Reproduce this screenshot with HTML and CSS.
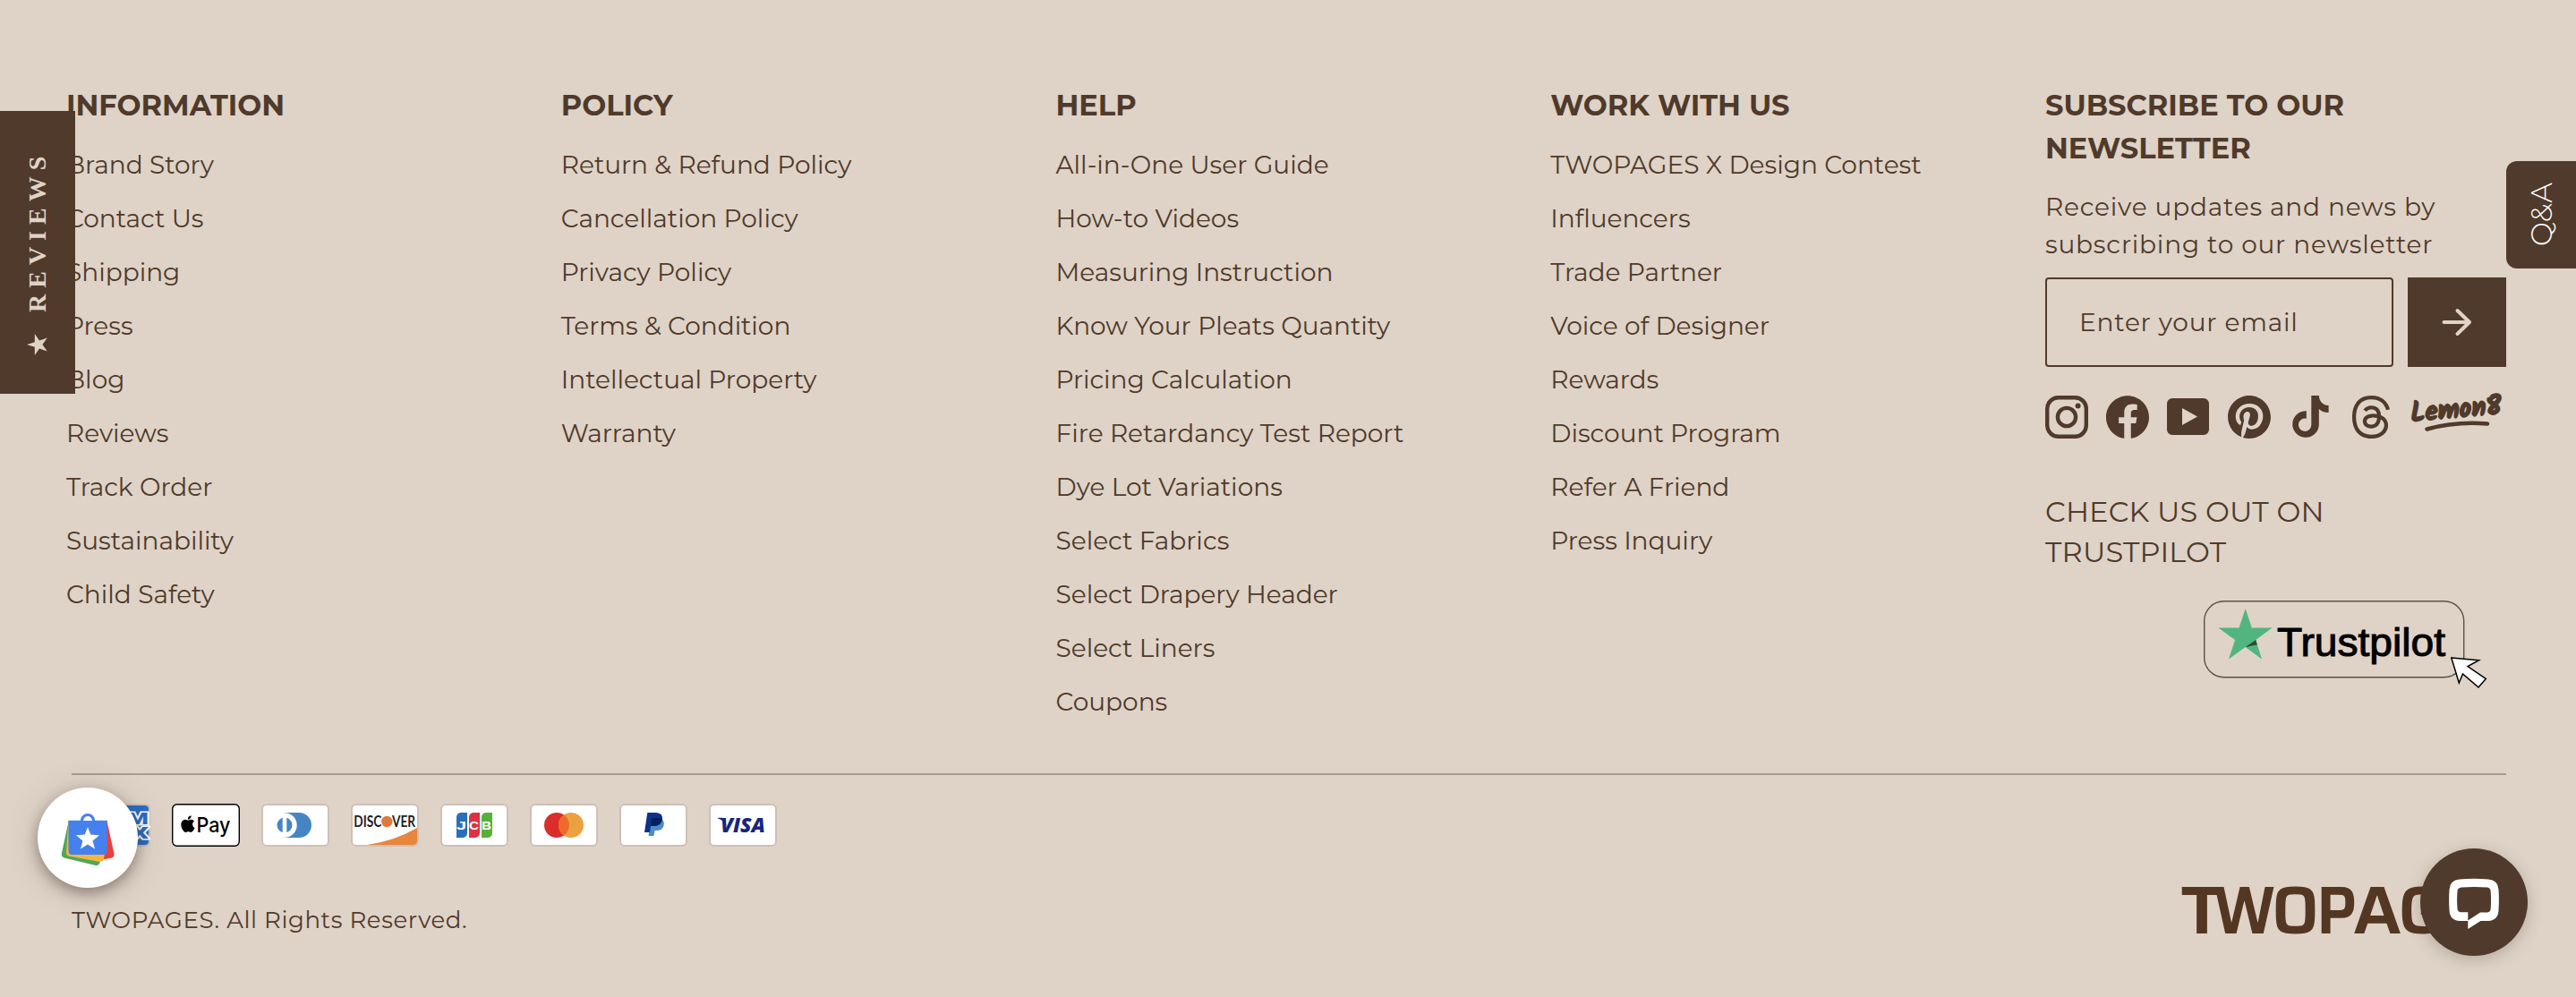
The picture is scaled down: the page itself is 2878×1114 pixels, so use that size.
FILE: index.html
```html
<!DOCTYPE html>
<html lang="en">
<head>
<meta charset="utf-8">
<title>TWOPAGES</title>
<link rel="stylesheet" href="styles.css">
</head>
<body>
<footer class="footer">
  <div class="columns">
    <section>
      <h2>INFORMATION</h2>
      <ul>
        <li>Brand Story</li>
        <li>Contact Us</li>
        <li>Shipping</li>
        <li>Press</li>
        <li>Blog</li>
        <li>Reviews</li>
        <li>Track Order</li>
        <li>Sustainability</li>
        <li>Child Safety</li>
      </ul>
    </section>
    <section>
      <h2>POLICY</h2>
      <ul>
        <li>Return &amp; Refund Policy</li>
        <li>Cancellation Policy</li>
        <li>Privacy Policy</li>
        <li>Terms &amp; Condition</li>
        <li>Intellectual Property</li>
        <li>Warranty</li>
      </ul>
    </section>
    <section>
      <h2>HELP</h2>
      <ul>
        <li>All-in-One User Guide</li>
        <li>How-to Videos</li>
        <li>Measuring Instruction</li>
        <li>Know Your Pleats Quantity</li>
        <li>Pricing Calculation</li>
        <li>Fire Retardancy Test Report</li>
        <li>Dye Lot Variations</li>
        <li>Select Fabrics</li>
        <li>Select Drapery Header</li>
        <li>Select Liners</li>
        <li>Coupons</li>
      </ul>
    </section>
    <section>
      <h2>WORK WITH US</h2>
      <ul>
        <li>TWOPAGES X Design Contest</li>
        <li>Influencers</li>
        <li>Trade Partner</li>
        <li>Voice of Designer</li>
        <li>Rewards</li>
        <li>Discount Program</li>
        <li>Refer A Friend</li>
        <li>Press Inquiry</li>
      </ul>
    </section>
    <section class="newsletter">
      <h2>SUBSCRIBE TO OUR NEWSLETTER</h2>
      <p class="lead">Receive updates and news by subscribing to our newsletter</p>
      <form class="signup">
        <div class="field">Enter your email</div>
        <button type="button" class="send" aria-label="Subscribe">
          <svg width="34" height="34" viewBox="0 0 34 34"><path d="M2.5 17H31M17.5 4L31 17L17.5 30" fill="none" stroke="#dfd3c7" stroke-width="4" stroke-linecap="round" stroke-linejoin="round"/></svg>
        </button>
      </form>
      <div class="social">
        <svg width="48" height="48" viewBox="0 0 48 48"><rect x="2.2" y="2.2" width="43.6" height="43.6" rx="12.5" fill="none" stroke="currentColor" stroke-width="4.4"/><circle cx="24" cy="24" r="10.1" fill="none" stroke="currentColor" stroke-width="4.4"/><circle cx="36.6" cy="11.4" r="3"/></svg>
        <svg width="48" height="48" viewBox="0 0 24 24"><path d="M24 12.073c0-6.627-5.373-12-12-12s-12 5.373-12 12c0 5.99 4.388 10.954 10.125 11.854v-8.385H7.078v-3.47h3.047V9.43c0-3.007 1.792-4.669 4.533-4.669 1.312 0 2.686.235 2.686.235v2.953H15.83c-1.491 0-1.956.925-1.956 1.874v2.25h3.328l-.532 3.47h-2.796v8.385C19.612 23.027 24 18.062 24 12.073z"/></svg>
        <svg width="48" height="48" viewBox="0 0 48 48"><path fill-rule="evenodd" d="M6 3H41a6 6 0 0 1 6 6V38a6 6 0 0 1-6 6H6a6 6 0 0 1-6-6V9a6 6 0 0 1 6-6ZM17 14V33L34 23.5Z"/></svg>
        <svg width="48" height="48" viewBox="0 0 24 24"><path d="M12.017 0C5.396 0 .029 5.367.029 11.987c0 5.079 3.158 9.417 7.618 11.162-.105-.949-.199-2.403.041-3.439.219-.937 1.406-5.957 1.406-5.957s-.359-.72-.359-1.781c0-1.663.967-2.911 2.168-2.911 1.024 0 1.518.769 1.518 1.688 0 1.029-.653 2.567-.992 3.992-.285 1.193.6 2.165 1.775 2.165 2.128 0 3.768-2.245 3.768-5.487 0-2.861-2.063-4.869-5.008-4.869-3.41 0-5.409 2.562-5.409 5.199 0 1.033.394 2.143.889 2.741.099.12.112.225.085.345-.09.375-.293 1.199-.334 1.363-.053.225-.172.271-.401.165-1.495-.69-2.433-2.878-2.433-4.646 0-3.776 2.748-7.252 7.92-7.252 4.158 0 7.392 2.967 7.392 6.923 0 4.135-2.607 7.462-6.233 7.462-1.214 0-2.354-.629-2.758-1.379l-.749 2.848c-.269 1.045-1.004 2.352-1.498 3.146 1.123.345 2.306.535 3.55.535 6.607 0 11.985-5.365 11.985-11.987C23.97 5.39 18.592.026 11.985.026L12.017 0z"/></svg>
        <svg width="48" height="48" viewBox="0 0 48 48"><path d="M25.3 0H33.8C34 6 38 11 44.6 11V19C40 19 36.5 17.5 33.8 15V33.2A14.8 14.8 0 1 1 19.8 17.2V25.7A7.2 7.2 0 1 0 25.3 33Z"/></svg>
        <svg width="48" height="48" viewBox="0 0 24 24"><path d="M12.186 24h-.007c-3.581-.024-6.334-1.205-8.184-3.509C2.35 18.44 1.5 15.586 1.472 12.01v-.017c.03-3.579.879-6.43 2.525-8.482C5.845 1.205 8.6.024 12.18 0h.014c2.746.02 5.043.725 6.826 2.098 1.677 1.29 2.858 3.13 3.509 5.467l-2.04.569c-1.104-3.96-3.898-5.984-8.304-6.015-2.91.022-5.11.936-6.54 2.717C4.307 6.504 3.616 8.914 3.589 12c.027 3.086.718 5.496 2.057 7.164 1.43 1.783 3.631 2.698 6.54 2.717 2.623-.02 4.358-.631 5.8-2.045 1.647-1.613 1.618-3.593 1.09-4.798-.31-.71-.873-1.3-1.634-1.75-.192 1.352-.622 2.446-1.284 3.272-.886 1.102-2.14 1.704-3.73 1.79-1.202.065-2.361-.218-3.259-.801-1.063-.689-1.685-1.74-1.752-2.964-.065-1.19.408-2.285 1.33-3.082.88-.76 2.119-1.207 3.583-1.291a13.853 13.853 0 0 1 3.02.142c-.126-.742-.375-1.332-.75-1.757-.513-.586-1.308-.883-2.359-.89h-.029c-.844 0-1.992.232-2.721 1.32L7.734 7.847c.98-1.454 2.568-2.256 4.478-2.256h.044c3.194.02 5.097 1.975 5.287 5.388.108.046.216.094.321.142 1.49.7 2.58 1.761 3.154 3.07.797 1.82.871 4.79-1.548 7.158-1.85 1.81-4.094 2.628-7.277 2.65Zm1.003-11.69c-.242 0-.487.007-.739.021-1.836.103-2.98.946-2.916 2.143.067 1.256 1.452 1.839 2.784 1.767 1.224-.065 2.818-.543 3.086-3.71a10.5 10.5 0 0 0-2.215-.221z"/></svg>
        <svg class="lemon-logo" width="106" height="48" viewBox="0 0 106 48"><text class="lemon" textLength="102" lengthAdjust="spacingAndGlyphs" transform="translate(3 29.500) rotate(-5)">Lemon8</text><path d="M20.500 37.500Q53 28.500 88 31.500" fill="none" stroke="currentColor" stroke-width="4.6" stroke-linecap="round"/></svg>
      </div>
      <p class="check">CHECK US OUT ON TRUSTPILOT</p>
      <svg class="trust" width="320" height="104" viewBox="2460 668 320 104">
        <rect x="2462.7" y="671.7" width="290" height="85" rx="22" fill="none" stroke="#57504a" stroke-width="1.4"/>
        <path d="M2508.700 680L2515.800 701.500H2538.500L2520.300 715L2527 736.500L2508.600 723L2490 736.500L2497 715L2478.500 701.500H2501.500Z" fill="#52b580"/>
        <path d="M2508.600 723L2520.300 715L2521.700 720.500Z" fill="#245334"/>
        <text class="trust-name" x="2544" y="733" textLength="188" lengthAdjust="spacingAndGlyphs">Trustpilot</text>
        <path d="M2738.800 735L2769.500 737.700L2757 744.500L2777.300 758.500L2769 768L2751.500 753L2747.300 763Z" fill="#fff" stroke="#000" stroke-width="1.5"/>
      </svg>
    </section>
  </div>

  <div class="bottom">
    <div class="cards">
      <svg viewBox="0 0 76 48"><rect class="card" x="1" y="1" width="74" height="46" rx="5"/><path d="M6 2H70a4 4 0 0 1 4 4V42a4 4 0 0 1-4 4H6a4 4 0 0 1-4-4V6a4 4 0 0 1 4-4Z" fill="#2a6ec6"/><g class="amex"><text x="31" y="22.500" textLength="43" lengthAdjust="spacingAndGlyphs">AM</text><text x="37" y="38.500" textLength="37" lengthAdjust="spacingAndGlyphs">EX</text></g></svg>
      <svg viewBox="0 0 76 48"><rect x=".7" y=".7" width="74.6" height="46.6" rx="5" fill="#fff" stroke="#000" stroke-width="1.4"/><g transform="translate(8.600 13.200) scale(.78)"><path d="M12.152 6.896c-.948 0-2.415-1.078-3.96-1.04-2.04.027-3.91 1.183-4.961 3.014-2.117 3.675-.546 9.103 1.519 12.09 1.013 1.454 2.208 3.09 3.792 3.039 1.52-.065 2.09-.987 3.935-.987 1.831 0 2.35.987 3.96.948 1.637-.026 2.676-1.48 3.676-2.948 1.156-1.688 1.636-3.325 1.662-3.415-.039-.013-3.182-1.221-3.22-4.857-.026-3.04 2.48-4.494 2.597-4.559-1.429-2.09-3.623-2.324-4.39-2.376-2-.156-3.675 1.09-4.61 1.09zM15.53 3.83c.843-1.012 1.4-2.427 1.245-3.83-1.207.052-2.662.805-3.532 1.818-.78.896-1.454 2.338-1.273 3.714 1.338.104 2.715-.688 3.56-1.702" fill="#000"/></g><text class="pay" x="27.500" y="31.500" textLength="38" lengthAdjust="spacingAndGlyphs">Pay</text></svg>
      <svg viewBox="0 0 76 48"><rect class="card" x="1" y="1" width="74" height="46" rx="5"/><path d="M26 10H42a14 14 0 0 1 0 28H26Z" fill="#4685c4"/><circle cx="26" cy="24" r="13.700" fill="#fff"/><circle cx="26" cy="24" r="8.500" fill="#4685c4"/><path d="M23.700 15h4.600v18h-4.600z" fill="#fff"/></svg>
      <svg viewBox="0 0 76 48"><rect class="card" x="1" y="1" width="74" height="46" rx="5"/><path d="M18 46Q48 42 74 27V42a4 4 0 0 1-4 4Z" fill="#e7863c"/><text class="disc" x="3.300" y="26" textLength="31" lengthAdjust="spacingAndGlyphs">DISC</text><text class="disc" x="46" y="26" textLength="26" lengthAdjust="spacingAndGlyphs">VER</text><circle cx="40.300" cy="20" r="6.200" fill="#dd7a3e"/></svg>
      <svg viewBox="0 0 76 48"><rect class="card" x="1" y="1" width="74" height="46" rx="5"/><path transform="translate(18 10)" d="M5 0H12V23a5 5 0 0 1-5 5H0V5a5 5 0 0 1 5-5Z" fill="#2b6fb8"/><path transform="translate(32 10)" d="M5 0H12V23a5 5 0 0 1-5 5H0V5a5 5 0 0 1 5-5Z" fill="#dc3244"/><path transform="translate(46 10)" d="M5 0H12V23a5 5 0 0 1-5 5H0V5a5 5 0 0 1 5-5Z" fill="#58b03a"/><text class="jcb" x="18" y="28.500" textLength="11" lengthAdjust="spacingAndGlyphs">J</text><text class="jcb" x="32" y="28.500" textLength="11" lengthAdjust="spacingAndGlyphs">C</text><text class="jcb" x="46" y="28.500" textLength="11" lengthAdjust="spacingAndGlyphs">B</text></svg>
      <svg viewBox="0 0 76 48"><rect class="card" x="1" y="1" width="74" height="46" rx="5"/><circle cx="30" cy="24" r="14" fill="#d92e2b"/><circle cx="46" cy="24" r="14" fill="#eba140"/><path d="M38 12.500a14 14 0 0 1 0 23a14 14 0 0 1 0-23Z" fill="#ef6a2b"/></svg>
      <svg viewBox="0 0 76 48"><rect class="card" x="1" y="1" width="74" height="46" rx="5"/><path d="M35.500 16H46Q51 19 49.500 24.500Q48 30 41.500 30H39.500L38.500 36H32.500Z" fill="#4b8ccb"/><path d="M31.300 10H41Q49 10.500 48 17.500Q46.500 25 39 25H35L34 32H28Z" fill="#0c3283"/><path d="M36 16H45.500L48 17.200Q46.500 24 40.500 24.500H35Z" fill="#071f5d"/></svg>
      <svg viewBox="0 0 76 48"><rect class="card" x="1" y="1" width="74" height="46" rx="5"/><text class="visa" x="13" y="32" textLength="50" lengthAdjust="spacingAndGlyphs">VISA</text><path d="M10 15.800H15Q17.500 16 18.200 19L19.500 24Q16 18 10 16.500Z" fill="#15267f"/></svg>
    </div>
    <div class="legal">
      <p class="copy">TWOPAGES. All Rights Reserved.</p>
      <svg class="logo" width="364" height="60" viewBox="2436 987 364 60"><text transform="translate(0 1043)"><tspan x="2436" textLength="48" lengthAdjust="spacingAndGlyphs">T</tspan><tspan x="2473" textLength="69" lengthAdjust="spacingAndGlyphs">W</tspan><tspan x="2538" textLength="53" lengthAdjust="spacingAndGlyphs">O</tspan><tspan x="2588" textLength="45" lengthAdjust="spacingAndGlyphs">P</tspan><tspan x="2629" textLength="54" lengthAdjust="spacingAndGlyphs">A</tspan><tspan x="2679" textLength="50" lengthAdjust="spacingAndGlyphs">G</tspan></text></svg>
    </div>
  </div>
</footer>

<div class="reviews"><svg width="24" height="24" viewBox="0 0 24 24"><path d="M12 0L14.800 8.800H24L16.600 14L19.400 22.800L12 17.400L4.600 22.800L7.400 14L0 8.800H9.200Z" transform="rotate(90 12 12)" fill="#dfd3c7"/></svg><span>REVIEWS</span></div>
<div class="qa"><span>Q&amp;A</span></div>
<div class="shop">
  <svg width="112" height="112" viewBox="0 0 112 112">
    <path d="M34 37L77.500 37L85.500 74Q86 77.500 83 78.500L70 81Z" fill="#ea4038"/>
    <path d="M34.500 38L27 73Q26 77 29.500 78.500L65 87Q68.500 87.500 69.500 84L72 70Z" fill="#4da858"/>
    <path d="M34.500 37L32 72Q31.700 75 34.500 76.500L69.500 83Q73 83 74 80L76 66Z" fill="#f5b63f"/>
    <path d="M34.500 36.700H77.700V71a4 4 0 0 1-4 4H38.500a4 4 0 0 1-4-4Z" fill="#4481ee"/>
    <path d="M49.500 37V36.500a6.500 6.500 0 0 1 13 0V37Z" fill="#fff"/>
    <path d="M49.500 37a6.500 6.500 0 0 1 13 0" fill="none" stroke="#4481ee" stroke-width="3.200"/>
    <path d="M56 44L59.300 52.500L69 53.200L61.600 59.500L64 68.500L56 63.500L48 68.500L50.400 59.500L43 53.200L52.700 52.500Z" fill="#fff"/>
  </svg>
</div>
<div class="chat">
  <svg width="120" height="120" viewBox="0 0 120 120"><path fill="#fff" fill-rule="evenodd" d="M44 34.500Q60 33.200 76 34.500Q87 35.500 87.500 46Q88.300 58 87.500 69Q87 80.500 76 81H67.500L53.300 90V81H44Q33 80.500 32.500 69Q31.700 58 32.500 46Q33 35.500 44 34.500ZM46 43.500Q41.500 44 41.500 48Q40.700 58 41.500 67Q41.500 71 45.500 71.300H53.300V80.500L67 71.500H75Q78.500 71 78.700 67Q79.400 58 78.700 48Q78.500 44 75 43.500Q60 42.300 46 43.500Z"/></svg>
</div>
</body>
</html>
```
FILE: styles.css
```css
* { box-sizing: border-box; }
body {
  margin: 0;
  height: 1114px;
  overflow: hidden;
  background: #dfd3c7;
  color: #4f3a2b;
  font-family: Montserrat, Inter, sans-serif;
  font-weight: 400;
}
h2, p, ul { margin: 0; padding: 0; }

.columns {
  display: grid;
  grid-template-columns: repeat(4, 552.75px) 515px;
  height: 864px;
  padding: 94px 0 0 74px;
}
h2 {
  margin-bottom: 12px;
  font-size: 32px;
  line-height: 48px;
  font-weight: 700;
}
ul { list-style: none; }
li { font-size: 28px; line-height: 60px; }

.newsletter h2 { margin-bottom: 20px; }
.lead { font-size: 28px; line-height: 42px; letter-spacing: .8px; }
.signup {
  display: flex;
  justify-content: space-between;
  height: 100px;
  margin: 16px 0 32px;
}
.field {
  width: 389px;
  padding-left: 36px;
  border: 2px solid #4f3a2b;
  border-radius: 4px;
  font-size: 28px;
  line-height: 96px;
  letter-spacing: .8px;
}
.send {
  display: flex;
  align-items: center;
  justify-content: center;
  width: 110px;
  border: 0;
  padding: 0;
  background: #4f3a2b;
}
.social { display: flex; gap: 20px; height: 48px; }
.social svg { flex: none; fill: currentColor; overflow: visible; }
.lemon-logo { margin-left: -2px; }
.lemon { font: 700 31px Kalam, Lato, sans-serif; stroke: currentColor; stroke-width: 1.6; }
.check {
  width: 400px;
  margin-top: 59px;
  font-size: 32px;
  line-height: 45px;
  letter-spacing: .2px;
}
.trust { display: block; margin: 29px 0 0 175px; }
.trust-name { font: 500 44px "Liberation Sans", sans-serif; stroke: #000; stroke-width: 1; }

.bottom {
  margin: 0 78px 0 80px;
  border-top: 2px solid #aa9c90;
}
.cards { display: flex; gap: 24px; padding: 32px 0 0 12px; }
.cards svg { width: 76px; height: 48px; }
.card { fill: #fff; stroke: #cfc0b4; stroke-width: 2; }
.amex text { font: 900 19px Roboto, sans-serif; fill: #2a6ec6; stroke: #fff; stroke-width: 3; paint-order: stroke; }
.pay { font: 500 23px Inter, sans-serif; fill: #000; }
.disc { font: 700 16.5px Lato, sans-serif; fill: #1f1f20; }
.jcb { font: 700 12.5px "Liberation Sans", sans-serif; fill: #fff; }
.visa { font: italic 800 22px "Open Sans", sans-serif; fill: #15267f; }

.legal {
  display: flex;
  justify-content: space-between;
  margin-top: 41px;
}
.copy { padding-top: 25px; font-size: 26px; line-height: 32px; letter-spacing: .6px; }
.logo { font: 600 75px Saira, "Exo 2", Inter, sans-serif; fill: #543722; overflow: visible; }

.reviews {
  position: absolute;
  left: 0;
  top: 124px;
  width: 84px;
  height: 316px;
  display: flex;
  align-items: center;
  gap: 24px;
  padding-top: 43px;
  writing-mode: vertical-rl;
  transform: rotate(180deg);
  background: #4f3a2b;
  color: #dfd3c7;
  font: 700 28px/32px "Liberation Serif", serif;
  letter-spacing: 7px;
}
.qa {
  position: absolute;
  right: 0;
  top: 180px;
  width: 78px;
  height: 120px;
  display: flex;
  align-items: center;
  justify-content: center;
  writing-mode: vertical-rl;
  transform: rotate(180deg);
  border-radius: 0 12px 12px 0;
  background: #4f3a2b;
  color: #fff;
  font-size: 32px;
  font-weight: 300;
}
.shop {
  position: absolute;
  left: 42px;
  top: 880px;
  width: 112px;
  height: 112px;
  border-radius: 50%;
  background: #fff;
  box-shadow: 0 6px 16px rgba(60, 45, 35, .45), 0 2px 40px rgba(60, 45, 35, .14);
}
.chat {
  position: absolute;
  left: 2704px;
  top: 948px;
  width: 120px;
  height: 120px;
  border-radius: 50%;
  background: #4f3a2b;
  box-shadow: 0 4px 18px rgba(60, 45, 35, .25);
}
```
